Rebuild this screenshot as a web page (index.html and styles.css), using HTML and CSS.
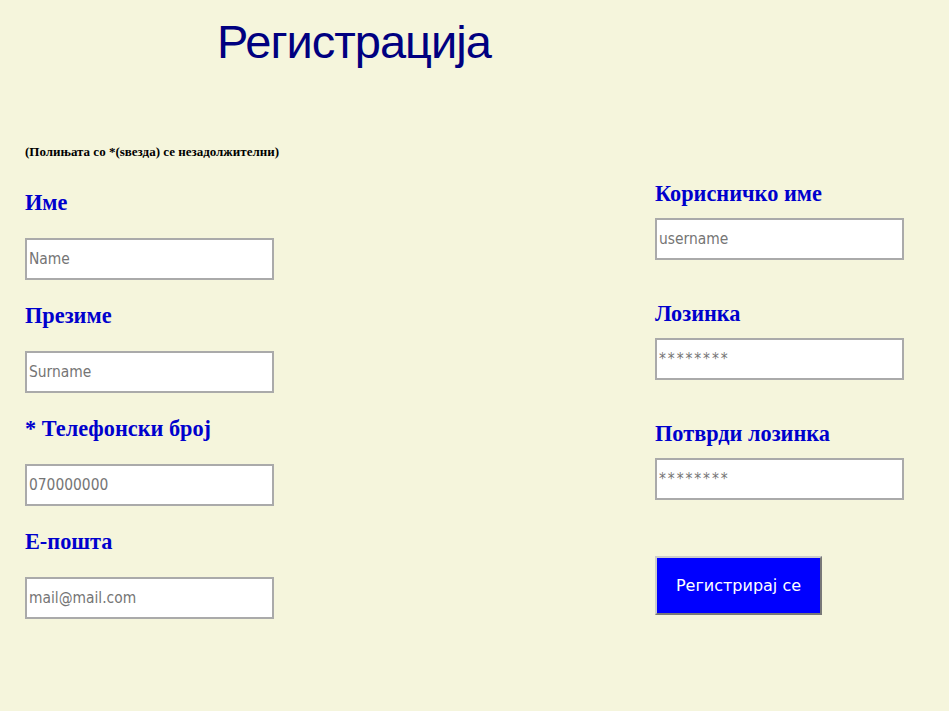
FILE: index.html
```html
<!DOCTYPE html>
<html lang="mk">
<head>
<meta charset="UTF-8">
<meta name="viewport" content="width=device-width, initial-scale=1.0">
<title>Регистрација</title>
<link rel="stylesheet" href="styles.css">
</head>
<body>

<h1 class="r_title">Регистрација</h1>

<form class="r_form" onsubmit="return false">
    <div class="r_col r_col-left">
        <p class="r_note">(Полињата со *(sвезда) се незадолжителни)</p>

        <div class="r_field">
            <label for="name" class="r_label">Име</label>
            <input type="text" id="name" class="r_input" placeholder="Name">
        </div>

        <div class="r_field">
            <label for="surname" class="r_label">Презиме</label>
            <input type="text" id="surname" class="r_input" placeholder="Surname">
        </div>

        <div class="r_field">
            <label for="phone" class="r_label">* Телефонски број</label>
            <input type="text" id="phone" class="r_input" placeholder="070000000">
        </div>

        <div class="r_field">
            <label for="email" class="r_label">Е-пошта</label>
            <input type="text" id="email" class="r_input" placeholder="mail@mail.com">
        </div>
    </div>

    <div class="r_col r_col-right">
        <div class="r_field r_field-right">
            <label for="username" class="r_label">Корисничко име</label>
            <input type="text" id="username" class="r_input" placeholder="username">
        </div>

        <div class="r_field r_field-right">
            <label for="pass" class="r_label">Лозинка</label>
            <input type="password" id="pass" class="r_input" placeholder="********">
        </div>

        <div class="r_field r_field-right">
            <label for="pass2" class="r_label">Потврди лозинка</label>
            <input type="password" id="pass2" class="r_input" placeholder="********">
        </div>

        <button type="submit" class="r_btn">Регистрирај се</button>
    </div>
</form>

</body>
</html>
```

FILE: styles.css
```css
body {
    margin: 0;
    padding: 0;
    background-color: #f5f5dc;
}

.r_title {
    margin: 14px 0 0 217px;
    font-family: "Liberation Sans", Arial, sans-serif;
    font-size: 47px;
    font-weight: normal;
    letter-spacing: -1px;
    line-height: 55px;
    color: #000080;
}

.r_form {
    display: flex;
    padding: 0 25px;
}

.r_col-left {
    width: 630px;
}

.r_note {
    margin: 76px 0 0 0;
    font-family: "Liberation Serif", "Times New Roman", serif;
    font-size: 13px;
    font-weight: bold;
    line-height: 14px;
    color: #000;
}

.r_field {
    display: flex;
    flex-direction: column;
    align-items: flex-start;
}

.r_col-left .r_field:first-of-type {
    margin-top: 32px;
}

.r_label {
    display: block;
    margin-bottom: 23px;
    font-family: "Liberation Serif", "Times New Roman", serif;
    font-size: 22.3px;
    font-weight: bold;
    line-height: 24px;
    color: #0000cd;
}

.r_input {
    box-sizing: border-box;
    width: 249px;
    height: 42px;
    margin: 0 0 24px 0;
    padding: 0 2px;
    border: 2px solid #aaa;
    background: #fff;
    font-family: "DejaVu Sans Condensed", "DejaVu Sans", sans-serif;
    font-size: 15.4px;
    outline: none;
}

.r_input::placeholder {
    color: #757575;
}

.r_input[type="password"]::placeholder {
    letter-spacing: 1.9px;
}

.r_col-right {
    padding-top: 113px;
}

.r_field-right .r_label {
    margin-bottom: 12px;
}

.r_field-right .r_input {
    margin-bottom: 42px;
}

.r_field-right:nth-child(3) .r_input {
    margin-bottom: 14px;
}

.r_btn {
    box-sizing: border-box;
    width: 167px;
    height: 59px;
    margin-top: 42px;
    border: 2px outset #ccc;
    background-color: #0000ff;
    color: #fff;
    font-family: "DejaVu Sans", sans-serif;
    font-size: 16px;
    cursor: pointer;
}
```
